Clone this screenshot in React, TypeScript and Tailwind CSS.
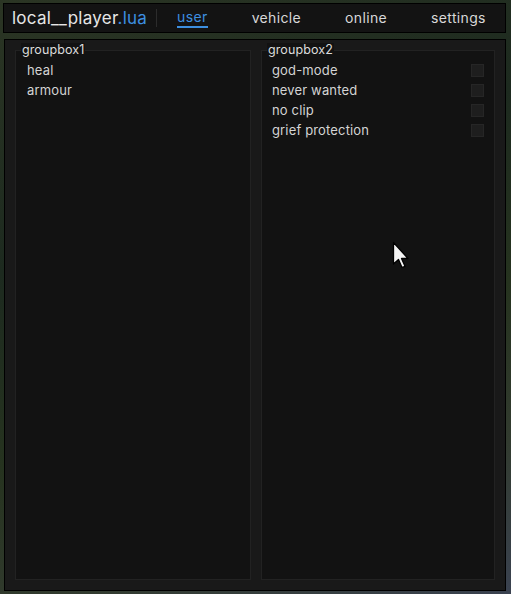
import React from 'react'

// --- Data ---
const tabs = ['user', 'vehicle', 'online', 'settings']
const leftItems = ['heal', 'armour']
const rightItems = ['god-mode', 'never wanted', 'no clip', 'grief protection']

const font = '[font-family:Inter,"Noto_Sans",sans-serif]'

const GroupBox: React.FC<{ title: string; children: React.ReactNode; className?: string }> = ({ title, children, className }) => {
  return (
    <div className={`relative h-full border border-[#222222] bg-[#121212] ${className ?? ''}`}>
      <span className="absolute -top-[8px] left-[5px] bg-[#121212] px-[1px] text-[12.5px] leading-[14px] tracking-[0.1px] text-[#dcdcdc]">
        {title}
      </span>
      <div className="flex flex-col pt-[9px]">{children}</div>
    </div>
  )
}

const Cursor: React.FC = () => (
  <svg className="absolute left-[392px] top-[241px]" width="18" height="29" viewBox="0 0 18 29">
    <path d="M1.5 1.5 L1.5 23 L6.5 18.5 L10 26.5 L13 25.3 L9.5 17.5 L16 17.5 Z" fill="#f4f4f4" stroke="#000" strokeWidth="1.3" strokeLinejoin="round" />
  </svg>
)

const App: React.FC = () => {
  return (
    <div className={`relative h-[594px] w-[511px] overflow-hidden bg-[linear-gradient(160deg,#2b3524_0%,#1d2a1f_35%,#26331f_60%,#323b2f_80%,#3a4250_100%)] ${font}`}>
      {/* header */}
      <div className="ml-[3px] mt-[3px] flex h-[30px] w-[503px] items-center border border-black bg-[#131313]">
        <div className="pl-[8px] text-[17px] leading-none tracking-[0.25px] text-[#e6e6e6]">
          local__player<span className="text-[#3d8fe0]">.lua</span>
        </div>
        <div className="ml-[9px] h-[18px] w-px bg-[#2c2c2c]" />
        <div className="ml-[20px] flex items-center gap-[44px]">
          {tabs.map((t, i) => (
            <span
              key={t}
              className={`text-[14px] leading-[18px] tracking-[0.35px] ${i === 0 ? 'border-b-2 border-[#3d8fe0] text-[#3d8fe0]' : 'text-[#d8d8d8]'}`}
            >
              {t}
            </span>
          ))}
        </div>
      </div>

      {/* main panel */}
      <div className="ml-[4px] mt-[6px] flex h-[552px] w-[502px] gap-[10px] border border-black bg-[#191919] p-[10px]">
        <GroupBox title="groupbox1" className="w-[236px]">
          {leftItems.map((it) => (
            <div key={it} className="h-[20px] pl-[11px] text-[13px] leading-[20px] tracking-[0.15px] text-[#d4d4d4]">
              {it}
            </div>
          ))}
        </GroupBox>
        <GroupBox title="groupbox2" className="flex-1">
          {rightItems.map((it) => (
            <div key={it} className="flex h-[20px] items-center justify-between pl-[10px] pr-[10px]">
              <span className="text-[13px] leading-[20px] tracking-[0.15px] text-[#d4d4d4]">{it}</span>
              <span className="h-[13px] w-[13px] border border-[#262626] bg-[#1e1e1e]" />
            </div>
          ))}
        </GroupBox>
      </div>

      <Cursor />
    </div>
  )
}

export default App
